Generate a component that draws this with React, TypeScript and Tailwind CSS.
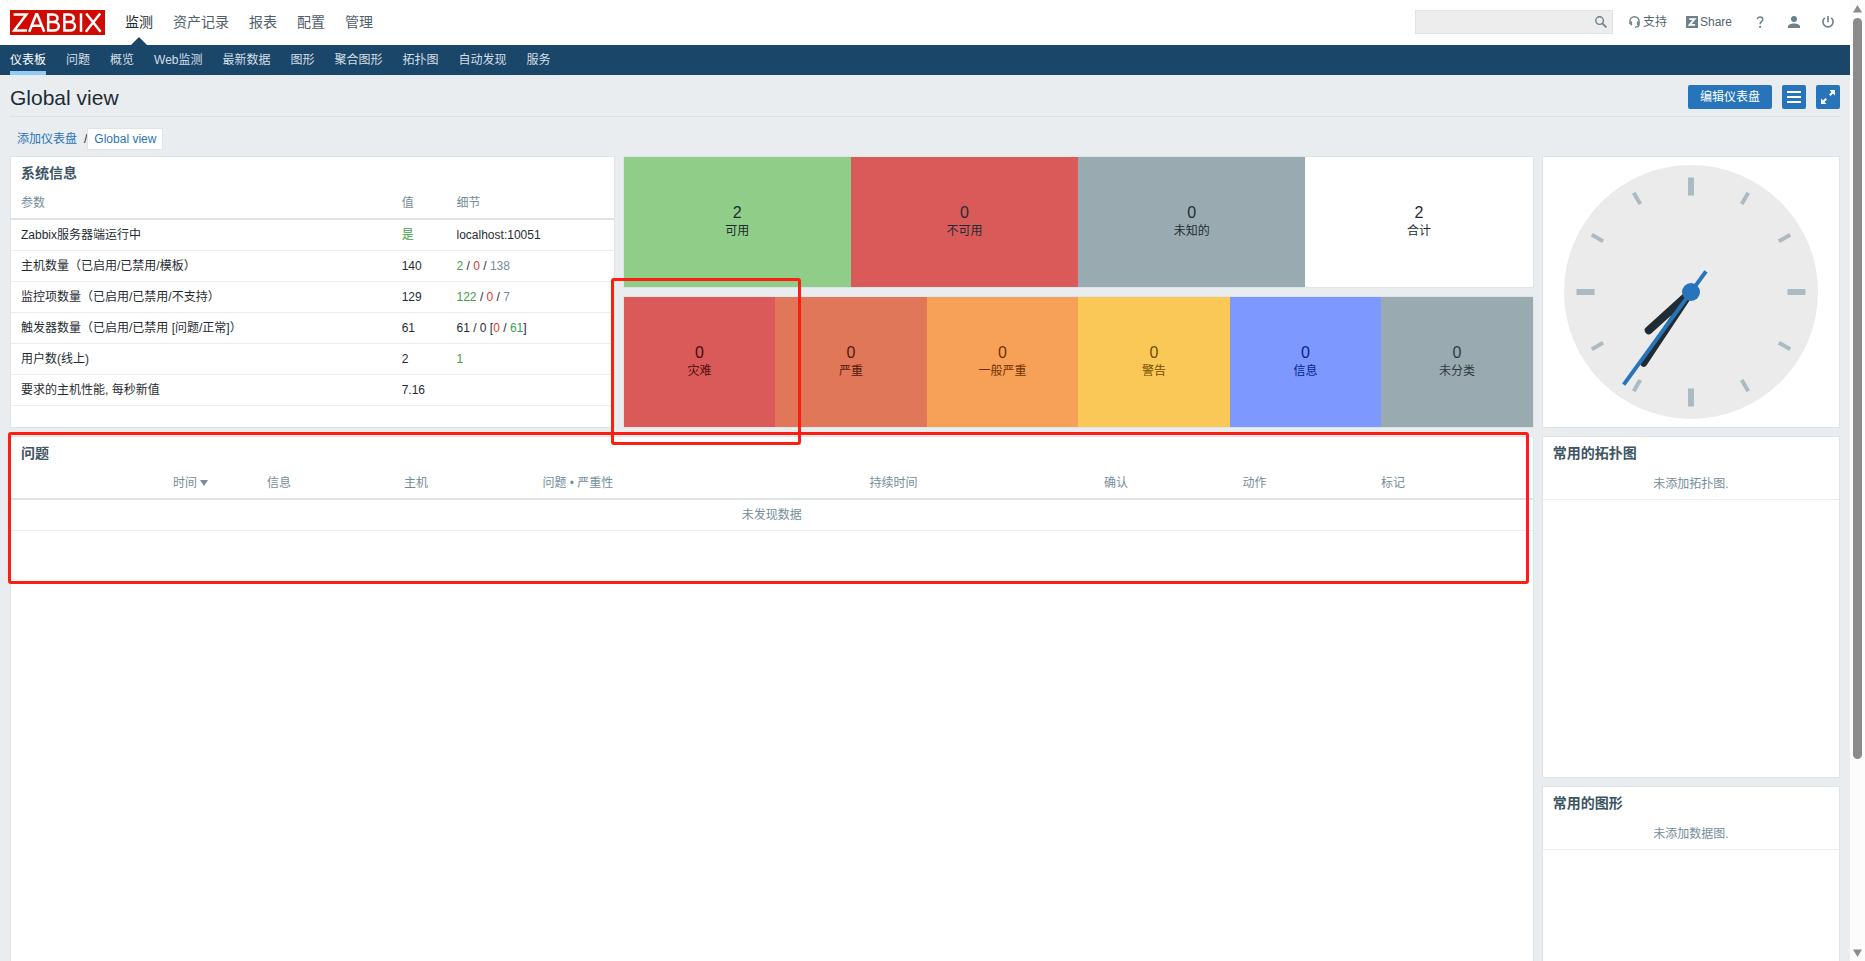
import React from "react";

const mainNav = ["监测", "资产记录", "报表", "配置", "管理"];
const subNav = ["仪表板", "问题", "概览", "Web监测", "最新数据", "图形", "聚合图形", "拓扑图", "自动发现", "服务"];

const green = "text-[#429e47]";
const red = "text-[#e33734]";
const grey = "text-[#768d99]";

const systemRows: { name: string; value: React.ReactNode; details: React.ReactNode }[] = [
  { name: "Zabbix服务器端运行中", value: <span className={green}>是</span>, details: "localhost:10051" },
  {
    name: "主机数量（已启用/已禁用/模板）",
    value: "140",
    details: (
      <>
        <span className={green}>2</span> / <span className={red}>0</span> / <span className={grey}>138</span>
      </>
    ),
  },
  {
    name: "监控项数量（已启用/已禁用/不支持）",
    value: "129",
    details: (
      <>
        <span className={green}>122</span> / <span className={red}>0</span> / <span className={grey}>7</span>
      </>
    ),
  },
  {
    name: "触发器数量（已启用/已禁用 [问题/正常]）",
    value: "61",
    details: (
      <>
        61 / 0 [<span className={red}>0</span> / <span className={green}>61</span>]
      </>
    ),
  },
  { name: "用户数(线上)", value: "2", details: <span className={green}>1</span> },
  { name: "要求的主机性能, 每秒新值", value: "7.16", details: "" },
];

const hostTiles = [
  { count: 2, label: "可用", style: "bg-[#90cd88] text-[#1f2c33]" },
  { count: 0, label: "不可用", style: "bg-[#d95a59] text-[#1f2c33]" },
  { count: 0, label: "未知的", style: "bg-[#9aaab1] text-[#1f2c33]" },
  { count: 2, label: "合计", style: "bg-white text-[#1f2c33]" },
];

const severityTiles = [
  { count: 0, label: "灾难", style: "bg-[#d95a59] text-[#4b0c0c]" },
  { count: 0, label: "严重", style: "bg-[#e07759] text-[#52190b]" },
  { count: 0, label: "一般严重", style: "bg-[#f7a058] text-[#733100]" },
  { count: 0, label: "警告", style: "bg-[#fac857] text-[#734d00]" },
  { count: 0, label: "信息", style: "bg-[#7d98ff] text-[#00268e]" },
  { count: 0, label: "未分类", style: "bg-[#9aaab1] text-[#2f3a40]" },
];

const card = "min-w-0 border border-[#dfe4e7] bg-white";

function CardTitle({ children }: { children: React.ReactNode }) {
  return <h4 className="px-[10px] pt-[6px] pb-[5px] text-sm leading-5 font-bold text-[#3c5563]">{children}</h4>;
}

function Tile({ count, label, style }: { count: number; label: string; style: string }) {
  return (
    <div className={`flex flex-1 flex-col items-center justify-center ${style}`}>
      <span className="text-base leading-[18px]">{count}</span>
      <span className="leading-[18px]">{label}</span>
    </div>
  );
}

function Header() {
  return (
    <header>
      <div className="flex h-[45px] items-center justify-between bg-white pr-4 pl-[10px]">
        <div className="flex h-full items-center gap-5">
          <a href="#" aria-label="ZABBIX" className="block">
            <svg width="95" height="25" viewBox="0 0 95 25" aria-hidden="true">
              <rect width="95" height="25" fill="#d10a00" />
              <g fill="none" stroke="#fff" strokeWidth="2.5">
                <path d="M3.600 4.600H16.400L4.200 20.600H17" />
                <path d="M19.200 21.800 26.200 4.200h1L34.200 21.800M21.800 15.800h9.800" />
                <path d="M38.200 4.600h4.800c6 0 6 7.500 0 7.500h-4.800 5.400c7 0 7 8.500 0 8.500h-5.400z" />
                <path d="M54.400 4.600h4.800c6 0 6 7.500 0 7.500h-4.800 5.400c7 0 7 8.500 0 8.500h-5.400z" />
                <path d="M71 3.400v18.400" />
                <path d="M76.200 3.400 90.600 21.800M90.200 3.400 75.800 21.800" />
              </g>
            </svg>
          </a>
          <nav className="flex h-full gap-5 text-sm">
            {mainNav.map((item, i) => (
              <a
                key={item}
                href="#"
                className={`relative flex h-full items-center pb-[2px] ${i === 0 ? "text-[#1f2c33]" : "text-[#4f6069]"}`}
              >
                {item}
                {i === 0 && (
                  <svg className="absolute bottom-0 left-1/2 -translate-x-1/2" width="16" height="8" viewBox="0 0 16 8" aria-hidden="true">
                    <path d="M0 8 8 0l8 8z" fill="#1a466a" />
                  </svg>
                )}
              </a>
            ))}
          </nav>
        </div>
        <div className="flex items-center pb-[2px] text-[#54646e]">
          <form className="relative mr-4 h-6 w-[198px]" onSubmit={(e) => e.preventDefault()}>
            <input
              type="text"
              aria-label="搜索"
              className="h-full w-full border border-[#dfe4e7] bg-[#ededed] pr-7 pl-1 outline-none"
            />
            <button type="submit" aria-label="搜索" className="absolute top-[6px] right-[6px]">
              <svg width="12" height="12" viewBox="0 0 12 12" fill="none" stroke="#6d808b" aria-hidden="true">
                <circle cx="4.6" cy="4.6" r="3.8" strokeWidth="1.4" />
                <path d="m7.400 7.400 4 4" strokeWidth="1.800" />
              </svg>
            </button>
          </form>
          <a href="#" className="mr-[19px] flex items-center gap-[3px]">
            <svg width="11" height="12" viewBox="0 0 11 12" fill="none" stroke="#6d808b" aria-hidden="true">
              <path d="M.9 8V5.300a4.600 4.600 0 0 1 9.200 0V8.200c0 1.900-1.200 2.900-4 2.900" strokeWidth="1.400" />
              <path d="M2.200 5.600v3.600M8.800 5.600v3.600" strokeWidth="1.800" />
            </svg>
            支持
          </a>
          <a href="#" className="mr-6 flex items-center gap-[2px]">
            <svg width="12" height="12" viewBox="0 0 12 12" aria-hidden="true">
              <rect width="12" height="12" fill="#6d808b" />
              <path d="M3.200 3.100h5.400L3.600 8.900h5.500" fill="none" stroke="#fff" strokeWidth="1.800" />
            </svg>
            Share
          </a>
          <a href="#" aria-label="帮助" className="mr-6">
            <svg width="8" height="12" viewBox="0 0 8 12" fill="none" stroke="#6d808b" aria-hidden="true">
              <path d="M1.400 3.200C1.400.2 6.800.2 6.800 3.300 6.800 5.300 4.100 5.600 4.100 8.200" strokeWidth="1.500" />
              <path d="M4.100 10v2" strokeWidth="1.800" />
            </svg>
          </a>
          <a href="#" aria-label="用户资料" className="mr-[22px]">
            <svg width="12" height="12" viewBox="0 0 12 12" fill="#6d808b" aria-hidden="true">
              <circle cx="6" cy="3" r="3" />
              <path d="M0 12v-1.600C0 8.400 3 7.400 6 7.400s6 1 6 3V12z" />
            </svg>
          </a>
          <a href="#" aria-label="退出">
            <svg width="12" height="12" viewBox="0 0 12 12" fill="none" stroke="#6d808b" strokeWidth="1.600" aria-hidden="true">
              <path d="M6 0v6.200M2.800 1.800a5.100 5.100 0 1 0 6.400 0" />
            </svg>
          </a>
        </div>
      </div>
      <nav className="flex h-[30px] gap-5 bg-[#1a466a] px-[10px] text-[#d3dfe8]">
        {subNav.map((item, i) => (
          <a
            key={item}
            href="#"
            className={`flex h-full items-center border-b-4 pt-1 ${i === 0 ? "border-[#8dcaf8] text-white" : "border-transparent"}`}
          >
            {item}
          </a>
        ))}
      </nav>
    </header>
  );
}

function PageTitle() {
  const button = "flex h-6 items-center justify-center rounded-[2px] bg-[#2874ba] text-white";
  return (
    <div className="flex h-[42px] items-center justify-between border-b border-[#dce1e4]">
      <h1 className="pt-1 text-[21px] leading-6 text-[#1f2c33]">Global view</h1>
      <div className="flex gap-[10px] pt-1 pb-[2px]">
        <button type="button" className={`${button} px-3`}>
          编辑仪表盘
        </button>
        <button type="button" aria-label="操作" className={`${button} w-6`}>
          <svg width="14" height="12" viewBox="0 0 14 12" fill="#fff" aria-hidden="true">
            <path d="M0 0h14v2H0zM0 5h14v2H0zM0 10h14v2H0z" />
          </svg>
        </button>
        <button type="button" aria-label="全屏" className={`${button} w-6`}>
          <svg width="14" height="14" viewBox="0 0 14 14" aria-hidden="true">
            <path d="M8.500 0H14v5.500zM0 8.500V14h5.500z" fill="#fff" />
            <path d="M12 2 8.800 5.200M2 12l3.200-3.200" stroke="#fff" strokeWidth="2" />
          </svg>
        </button>
      </div>
    </div>
  );
}

function Clock() {
  const bigTicks = [0, 90, 180, 270];
  const smallTicks = [30, 60, 120, 150, 210, 240, 300, 330];
  return (
    <svg width="254" height="254" viewBox="-127 -127 254 254" role="img" aria-label="07:35:36">
      <circle r="127" fill="#ebebeb" />
      <g stroke="#acbac2">
        {bigTicks.map((a) => (
          <path key={a} d="M0-114.500V-96.500" strokeWidth="6" transform={`rotate(${a})`} />
        ))}
        {smallTicks.map((a) => (
          <path key={a} d="M0-114.500V-101.500" strokeWidth="4" transform={`rotate(${a})`} />
        ))}
      </g>
      <g stroke="#1f2c33" strokeLinecap="round">
        <path d="M0 0V-57" strokeWidth="8" transform="rotate(227.8)" />
        <path d="M0 0V-85.500" strokeWidth="7" transform="rotate(213.6)" />
      </g>
      <path d="M0 25.500V-114.500" stroke="#2874ba" strokeWidth="4" transform="rotate(216)" />
      <circle r="9" fill="#2874ba" />
    </svg>
  );
}

function SystemInfo() {
  const cell = "h-[31px] border-b border-[#ebeef0] px-[5px] py-0";
  const head = "h-8 border-b-2 border-[#dce2e5] px-[5px] text-left font-normal text-[#768d99]";
  return (
    <section className={`col-span-4 row-span-2 ${card}`}>
      <CardTitle>系统信息</CardTitle>
      <table className="w-full table-fixed border-separate border-spacing-0">
        <colgroup>
          <col className="w-[64%]" />
          <col className="w-[9.1%]" />
          <col />
        </colgroup>
        <thead>
          <tr>
            <th className={`${head} pl-[10px]`}>参数</th>
            <th className={head}>值</th>
            <th className={head}>细节</th>
          </tr>
        </thead>
        <tbody>
          {systemRows.map((row) => (
            <tr key={row.name}>
              <td className={`${cell} pl-[10px]`}>{row.name}</td>
              <td className={cell}>{row.value}</td>
              <td className={cell}>{row.details}</td>
            </tr>
          ))}
        </tbody>
      </table>
    </section>
  );
}

function Problems() {
  const head = "h-8 border-b-2 border-[#dce2e5] px-[5px] text-left font-normal";
  return (
    <section className={`relative col-span-10 row-span-5 ${card}`}>
      <CardTitle>问题</CardTitle>
      <table className="w-full table-fixed border-separate border-spacing-0 text-[#768d99]">
        <colgroup>
          <col className="w-[16.5%]" />
          <col className="w-[9%]" />
          <col className="w-[9.1%]" />
          <col className="w-[21.5%]" />
          <col className="w-[15.4%]" />
          <col className="w-[9.1%]" />
          <col className="w-[9.1%]" />
          <col />
        </colgroup>
        <thead>
          <tr>
            <th className={head}>
              <a href="#" className="flex items-center justify-end gap-[3px] pr-[49px]">
                时间
                <svg width="8" height="6" viewBox="0 0 8 6" aria-hidden="true">
                  <path d="M0 0h8L4 6z" fill="#768d99" />
                </svg>
              </a>
            </th>
            <th className={head}>信息</th>
            <th className={head}>主机</th>
            <th className={head}>问题 • 严重性</th>
            <th className={head}>持续时间</th>
            <th className={head}>确认</th>
            <th className={head}>动作</th>
            <th className={head}>标记</th>
          </tr>
        </thead>
        <tbody>
          <tr>
            <td colSpan={8} className="h-[31px] border-b border-[#ebeef0] text-center">
              未发现数据
            </td>
          </tr>
        </tbody>
      </table>
      <div className="pointer-events-none absolute -top-[5px] right-1 -left-[3px] z-10 h-[152px] rounded-[3px] border-[3px] border-[#ff1d12]" />
    </section>
  );
}

function Favourites({ title, message }: { title: string; message: string }) {
  return (
    <section className={`col-span-2 h-[342px] ${card}`}>
      <CardTitle>{title}</CardTitle>
      <p className="border-b border-[#ebeef0] pt-[7px] pb-[5px] text-center leading-[19px] text-[#768d99]">{message}</p>
    </section>
  );
}

function Scrollbar() {
  return (
    <div className="flex w-[15px] shrink-0 flex-col items-center bg-[#fcfcfc] pt-[5px] pb-1" aria-hidden="true">
      <svg width="9" height="8" viewBox="0 0 9 8">
        <path d="M4.500 0 9 7.500H0z" fill="#8b8b8b" />
      </svg>
      <div className="mt-[5px] flex w-[9px] flex-1 flex-col">
        <div className="h-[calc(80%-4px)] rounded-full bg-[#8b8b8b]" />
      </div>
      <svg width="9" height="8" viewBox="0 0 9 8">
        <path d="M0 .5h9L4.500 8z" fill="#8b8b8b" />
      </svg>
    </div>
  );
}

export default function App() {
  return (
    <div className="flex h-screen overflow-hidden bg-[#e9edf0] font-['Liberation_Sans','Noto_Sans_CJK_SC',sans-serif] text-xs text-[#1f2c33]">
      <div className="min-w-0 flex-1 overflow-hidden">
        <Header />
        <main className="px-[10px]">
          <PageTitle />
          <div className="mt-[10px] mb-[6px] flex h-[23px] items-center pl-[7px]">
            <a href="#" className="text-[#2874ba]">
              添加仪表盘
            </a>
            <span className="ml-[7px]">/</span>
            <a
              href="#"
              className="flex h-[22px] items-center border border-[#dfe4e7] bg-white px-[6px] text-[#2874ba]"
            >
              Global view
            </a>
          </div>
          <div className="grid grid-cols-12 gap-2">
            <SystemInfo />
            <section className={`col-span-6 flex h-[132px] ${card}`}>
              {hostTiles.map((t) => (
                <Tile key={t.label} {...t} />
              ))}
            </section>
            <section className={`col-span-2 row-span-2 flex items-center justify-center ${card}`}>
              <Clock />
            </section>
            <section className={`relative col-span-6 flex h-[132px] ${card}`}>
              {severityTiles.map((t) => (
                <Tile key={t.label} {...t} />
              ))}
              <div className="pointer-events-none absolute -top-[19px] -left-[13px] z-10 h-[167px] w-[190px] rounded-[3px] border-[3px] border-[#ff1d12]" />
            </section>
            <Problems />
            <Favourites title="常用的拓扑图" message="未添加拓扑图." />
            <Favourites title="常用的图形" message="未添加数据图." />
          </div>
        </main>
      </div>
      <Scrollbar />
    </div>
  );
}
